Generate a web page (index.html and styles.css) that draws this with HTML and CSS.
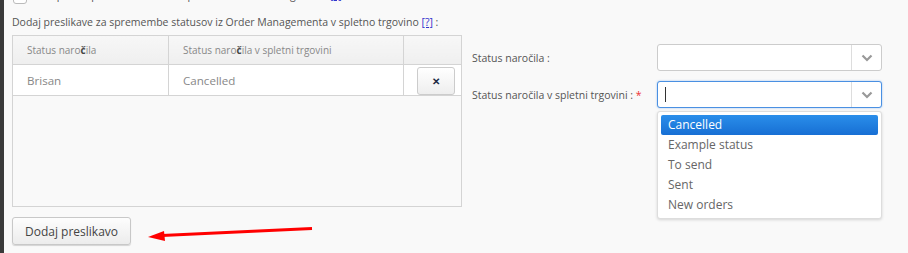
FILE: index.html
```html
<!DOCTYPE html>
<html lang="sl">
<head>
  <meta charset="UTF-8">
  <title>Preslikave statusov</title>
  <link rel="stylesheet" href="styles.css">
</head>
<body>
  <div class="page">
    <div class="edge"></div>
    <div class="content">

      <!-- zgornja vrstica (odrezana) -->
      <div class="top-row">
        <span class="checkbox"></span>
        <span class="top-text">Uporabi preslikave statusov pri uvozu naročil iz trgovine</span>
        <a class="help" href="#">[?]</a>
      </div>

      <p class="intro">Dodaj preslikave za spremembe statusov iz Order Managementa v spletno trgovino <a class="help" href="#">[?]</a> :</p>

      <div class="mapping">
        <div class="left">
          <div class="grid">
            <table>
              <thead>
                <tr>
                  <th class="c1">Status naro<b>č</b>ila</th>
                  <th class="c2">Status naro<b>č</b>ila v spletni trgovini</th>
                  <th class="c3"></th>
                </tr>
              </thead>
              <tbody>
                <tr>
                  <td>Brisan</td>
                  <td>Cancelled</td>
                  <td class="del-cell"><button class="del-btn">&#10005;</button></td>
                </tr>
              </tbody>
            </table>
          </div>
          <button class="add-btn">Dodaj preslikavo</button>
        </div>

        <div class="form">
          <div class="form-row">
            <label>Status naročila :</label>
            <div class="select">
              <span class="value"></span>
              <span class="arrow"><svg width="12" height="8" viewBox="0 0 12 8"><path d="M1.5 1.5 L6 6 L10.5 1.5" fill="none" stroke="#999" stroke-width="2.2"/></svg></span>
            </div>
          </div>
          <div class="form-row">
            <label>Status naročila v spletni trgovini : <span class="req">*</span></label>
            <div class="select focus">
              <span class="value"><span class="caret"></span></span>
              <span class="arrow"><svg width="12" height="8" viewBox="0 0 12 8"><path d="M1.5 1.5 L6 6 L10.5 1.5" fill="none" stroke="#999" stroke-width="2.2"/></svg></span>
              <ul class="dropdown">
                <li class="active">Cancelled</li>
                <li>Example status</li>
                <li>To send</li>
                <li>Sent</li>
                <li>New orders</li>
              </ul>
            </div>
          </div>
        </div>
      </div>
    </div>
  </div>

  <!-- puscica -->
  <svg class="annot" width="908" height="253" viewBox="0 0 908 253">
    <path d="M312 228.5 L162 235.5" stroke="#f00" stroke-width="3" fill="none"/>
    <path d="M148 237 L164 231 L165 241 Z" fill="#f00"/>
  </svg>
</body>
</html>
```

FILE: styles.css
```css
body {
  margin: 0;
  background-color: #f9f9f9;
  font-family: "Open Sans", Arial, sans-serif;
  font-size: 10.5px;
  color: #555;
}

.page {
  display: flex;
  height: 253px;
  overflow: hidden;
}

.edge {
  width: 4px;
  background-color: #3a3a3a;
  flex-shrink: 0;
}

.content {
  padding-left: 8px;
  flex: 1;
}

.top-row {
  display: flex;
  align-items: center;
  height: 14px;
  margin-top: -10px;
  gap: 8px;
}

.checkbox {
  width: 12px;
  height: 12px;
  border: 1px solid #bbb;
  border-radius: 3px;
  background: #fff;
  margin-left: 1px;
}

.top-text {
  color: #555;
  margin-left: 14px;
  position: relative;
  top: -2px;
}

.help {
  color: #33c;
  position: relative;
}

.top-row .help {
  top: -2px;
}

.intro {
  margin: 10px 0 5px;
  line-height: 16px;
}

.intro .help {
  top: 0;
}

.mapping {
  display: flex;
}

.left {
  width: 450px;
}

.grid {
  height: 170px;
  border: 1px solid #d4d4d4;
  background-color: #f9f9f9;
}

table {
  border-collapse: collapse;
  width: 100%;
}

th {
  height: 28px;
  background: linear-gradient(#f7f7f7, #efefef);
  color: #888;
  font-weight: normal;
  font-size: 10px;
  text-align: left;
  padding: 0 0 0 14px;
  border-right: 1px solid #d4d4d4;
  border-bottom: 1px solid #d4d4d4;
}

th b {
  color: #444;
}

th.c1 { width: 141px; }
th.c2 { width: 220px; }
th.c3 { border-right: none; }

td {
  height: 28px;
  background: #fff;
  color: #888;
  font-size: 11.6px;
  padding: 0 0 0 14px;
  border-right: 1px solid #d4d4d4;
  border-bottom: 1px solid #d4d4d4;
}

td.del-cell {
  border-right: none;
  padding: 0 0 0 13px;
  vertical-align: top;
}

.del-btn {
  margin-top: 2px;
  width: 38px;
  height: 28px;
  border: 1px solid #ccc;
  border-radius: 3px;
  background: linear-gradient(#fff, #eee);
  color: #1c2a44;
  font-size: 10px;
  font-weight: bold;
  padding: 0;
}

.add-btn {
  margin-top: 10px;
  height: 28px;
  padding: 0 12px;
  border: 1px solid #c8c8c8;
  border-radius: 3px;
  background: linear-gradient(#fdfdfd, #ececec);
  box-shadow: 0 1px 1px rgba(0, 0, 0, 0.15);
  font-family: "Open Sans", Arial, sans-serif;
  font-size: 12px;
  color: #444;
}

.form {
  margin-left: 10px;
  padding-top: 9px;
}

.form-row {
  display: flex;
  align-items: center;
  margin-bottom: 10px;
}

.form-row label {
  width: 185px;
  flex-shrink: 0;
  color: #555;
}

.req {
  color: #e33;
}

.select {
  position: relative;
  display: flex;
  width: 223px;
  height: 25px;
  border: 1px solid #ccc;
  border-radius: 3px;
  background: #fff;
}

.select.focus {
  border-color: #4a90e2;
  box-shadow: 0 0 2px rgba(74, 144, 226, 0.6);
}

.select .value {
  flex: 1;
  display: flex;
  align-items: center;
  padding-left: 7px;
}

.caret {
  width: 1px;
  height: 15px;
  background: #333;
}

.select .arrow {
  width: 29px;
  border-left: 1px solid #ddd;
  display: flex;
  align-items: center;
  justify-content: center;
}

.dropdown {
  position: absolute;
  top: 29px;
  left: -1px;
  width: 217px;
  margin: 0;
  padding: 3px;
  list-style: none;
  background: #fff;
  border: 1px solid #ddd;
  border-radius: 3px;
  box-shadow: 0 1px 3px rgba(0, 0, 0, 0.15);
  z-index: 10;
}

.dropdown li {
  height: 20px;
  line-height: 20px;
  padding-left: 7px;
  font-size: 12px;
  color: #666;
}

.dropdown li.active {
  background: linear-gradient(#2a8eea, #176fd4);
  color: #fff;
  border-radius: 2px;
}

.annot {
  position: absolute;
  left: 0;
  top: 0;
  pointer-events: none;
}
```
